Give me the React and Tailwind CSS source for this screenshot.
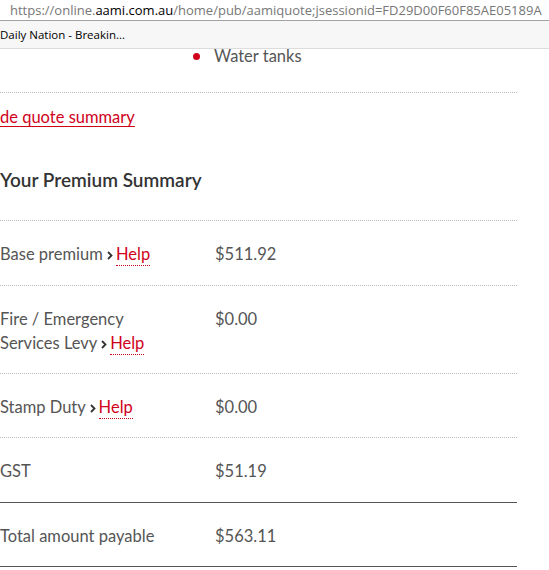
import React from "react";

const Chevron = () => (
  <svg width="6" height="9" viewBox="0 0 6 9" className="inline-block align-baseline mr-[3px]">
    <path d="M1 1 L4.5 4.5 L1 8" fill="none" stroke="#333" strokeWidth="1.8" />
  </svg>
);

const Help = () => (
  <span className="text-[#d0021b] border-b border-dotted border-[#d0021b] pb-[1px]">Help</span>
);

const Row = ({ children, value, h, border }) => (
  <div className={`flex pt-[21px] overflow-hidden ${h} ${border}`}>
    <div className="w-[215px] leading-[24px]">{children}</div>
    <div className="leading-[24px]">{value}</div>
  </div>
);

export default function App() {
  return (
    <div className="w-[549px] h-[570px] overflow-hidden bg-white" style={{ fontFamily: "Lato, 'Noto Sans', sans-serif" }}>
      <div className="h-[21px] border-b border-[#a3a3a3] bg-white whitespace-nowrap overflow-hidden pl-[10px] text-[13px] leading-[20px] text-[#777]" style={{ fontFamily: "'Open Sans', 'Noto Sans', sans-serif" }}>
        https://online.<span className="text-black">aami.com.au</span>/home/pub/aamiquote;jsessionid=FD29D00F60F85AE05189A
      </div>
      <div className="h-[28px] bg-[#f7f7f7] border-b border-[#dcdcdc] text-[11.5px] leading-[27px] text-black whitespace-nowrap" style={{ fontFamily: "'Open Sans', 'Noto Sans', sans-serif" }}>
        Daily Nation - Breakin...
      </div>
      <div className="w-[517px] text-[16.5px] text-[#555]">
        <div className="h-[44px] border-b border-dotted border-[#bbb] flex items-start">
          <div className="ml-[193px] mt-[-3px] flex items-center">
            <span className="w-[7px] h-[7px] rounded-full bg-[#d0021b] inline-block"></span>
            <span className="ml-[14px] leading-[20px]">Water tanks</span>
          </div>
        </div>
        <div className="pt-[12px] h-[42px]">
          <span className="text-[#d0021b] underline underline-offset-[3px] leading-[20px]">de quote summary</span>
        </div>
        <div className="h-[85px] flex items-center pt-[4px]">
          <h2 className="text-[19px] text-[#333] font-semibold leading-[24px]">Your Premium Summary</h2>
        </div>
        <div className="border-t border-dotted border-[#bbb]">
          <Row h="h-[65px]" border="border-b border-dotted border-[#bbb]" value="$511.92">Base premium <Chevron /><Help /></Row>
          <Row h="h-[88px]" border="border-b border-dotted border-[#bbb]" value="$0.00">Fire / Emergency<br />Services Levy <Chevron /><Help /></Row>
          <Row h="h-[64px]" border="border-b border-dotted border-[#bbb]" value="$0.00">Stamp Duty <Chevron /><Help /></Row>
          <Row h="h-[65px]" border="border-b border-[#555]" value="$51.19">GST</Row>
          <Row h="h-[64px]" border="border-b border-[#555]" value="$563.11">Total amount payable</Row>
        </div>
      </div>
    </div>
  );
}
